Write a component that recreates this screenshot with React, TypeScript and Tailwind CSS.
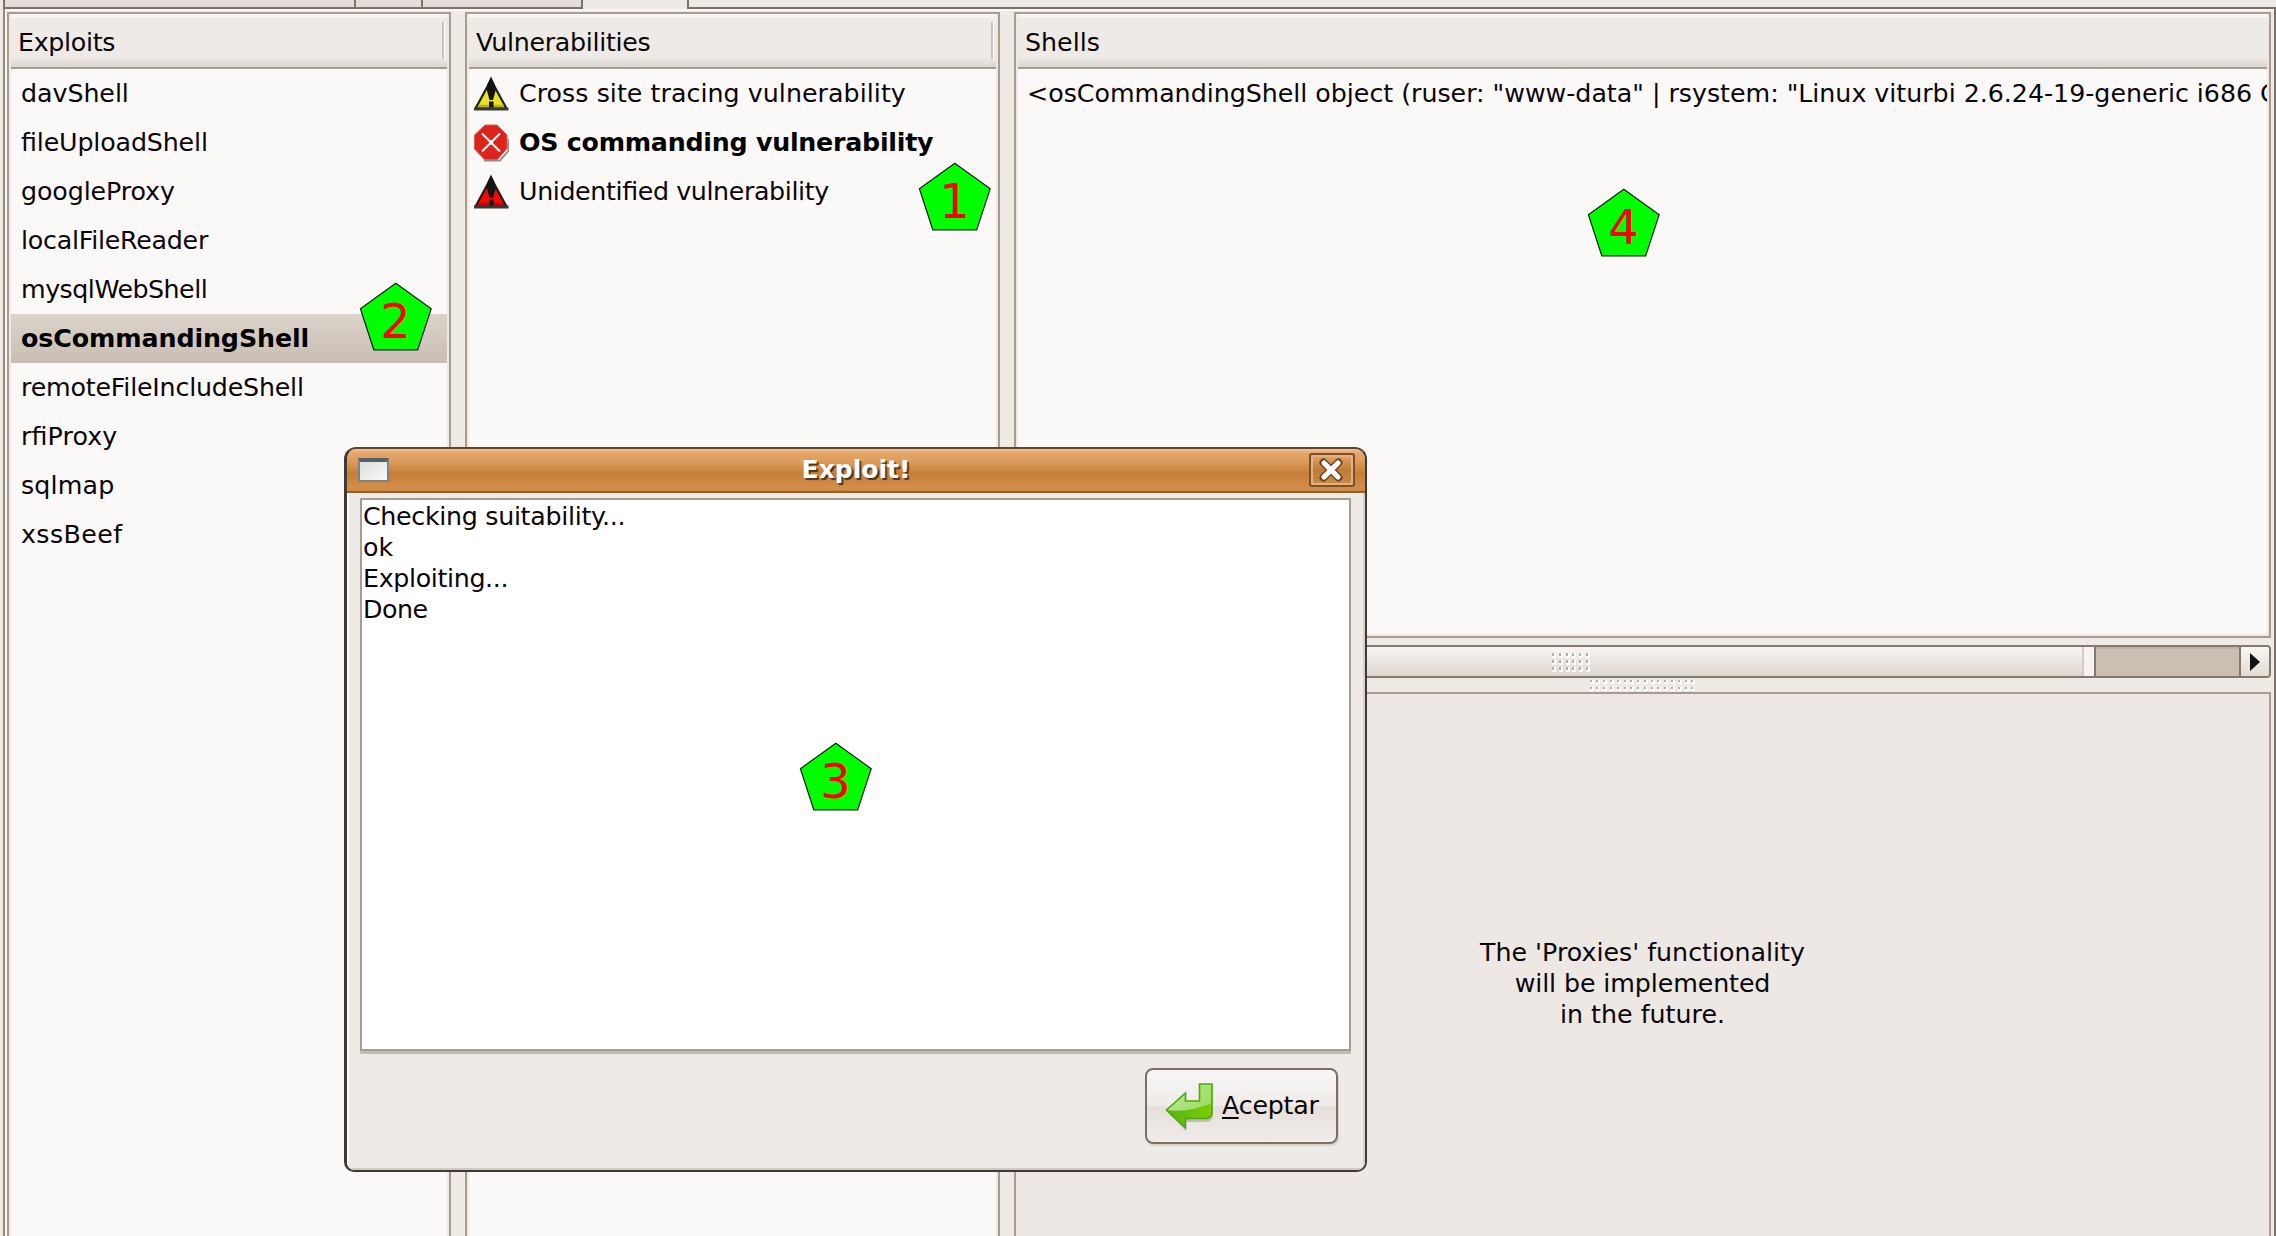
import React from "react";

const exploits = [
  { name: "davShell", tracking: "tracking-[-0.05px]" },
  { name: "fileUploadShell", tracking: "tracking-[-0.15px]" },
  { name: "googleProxy", tracking: "tracking-[-0.1px]" },
  { name: "localFileReader", tracking: "tracking-[-0.25px]" },
  { name: "mysqlWebShell", tracking: "tracking-[-0.5px]" },
  { name: "osCommandingShell", tracking: "tracking-[-0.1px]" },
  { name: "remoteFileIncludeShell", tracking: "tracking-[-0.2px]" },
  { name: "rfiProxy", tracking: "tracking-[0.1px]" },
  { name: "sqlmap", tracking: "tracking-[0.15px]" },
  { name: "xssBeef", tracking: "tracking-[0.4px]" },
];

const messages = [
  { text: "Checking suitability...", tracking: "tracking-[-0.3px]" },
  { text: "ok", tracking: "tracking-normal" },
  { text: "Exploiting...", tracking: "tracking-[-0.35px]" },
  { text: "Done", tracking: "tracking-[-0.5px]" },
];

function Pentagon({ n, className }: { n: number; className: string }) {
  return (
    <div className={`absolute h-[69px] w-[73px] ${className}`}>
      <svg className="block" width="73" height="69" viewBox="0 0 73 69">
        <path d="M36.8 1.2 L72.2 26.7 L58.7 67.8 H14.8 L1.4 26.7 Z" fill="#00ff00" stroke="#1c1c1c" strokeWidth="1.2" />
      </svg>
      <div className="absolute inset-x-0 top-[11px] text-center text-[48px] leading-[56px] text-[#ff0000]">{n}</div>
    </div>
  );
}

function Triangle({ fill, shade }: { fill: string; shade: string }) {
  return (
    <svg width="36" height="36" viewBox="0 0 36 36" className="block shrink-0">
      <path d="M18 4 L33.5 32.5 H2.5 Z" fill={fill} stroke="#1e1e1a" strokeWidth="2.2" strokeLinejoin="round" />
      <path d="M5.5 30 H31" stroke={shade} strokeWidth="2.4" />
      <path d="M1 33 H35.5" stroke="#383836" strokeWidth="2.8" />
      <path d="M18 0.5 L21.5 8 L23 13 L20 24 H16.5 L13.5 13 L14.5 8 Z" fill="#15150f" />
      <rect x="16" y="25.5" width="4.5" height="6" fill="#161610" />
    </svg>
  );
}

function StopIcon() {
  return (
    <svg width="36" height="40" viewBox="0 0 36 40" className="block shrink-0">
      <path d="M11 37.6 H27 L35.3 28 V16" fill="none" stroke="#8f8b88" strokeWidth="1.8" />
      <path d="M12 2 H24 L34 12 V25.5 L24.5 36.5 H11.5 L1.5 26 V12 Z" fill="#dc241c" stroke="#d95f58" strokeWidth="1" />
      <path d="M9 10.5 L27 28.5 M27 10.5 L9 28.5" stroke="#fff" strokeWidth="1.9" />
      <rect x="16" y="17.5" width="4" height="4" fill="#fff" />
    </svg>
  );
}

function Header({ title, divider, tracking }: { title: string; divider?: boolean; tracking: string }) {
  return (
    <div className="flex h-[55px] shrink-0 items-center justify-between border-b-2 border-[#a99b8d] bg-[linear-gradient(#f8f6f4_0,#f8f6f4_3px,#eeebe6_4px,#eeebe6_43px,#d9d5cf_53px)] pt-1 pl-[7px]">
      <span className={tracking}>{title}</span>
      {divider && <span className="mr-0.5 -mt-1 h-[37px] w-[3px] border-l-2 border-[#c9c4be] bg-white" />}
    </div>
  );
}

function Dots({ rows, cols }: { rows: number; cols: number }) {
  return (
    <div className="flex flex-col gap-[2.5px]">
      {Array.from({ length: rows }, (_, r) => (
        <div key={r} className="flex gap-[2.8px]">
          {Array.from({ length: cols }, (_, c) => (
            <i key={c} className="block h-[4.5px] w-[4px] border-r-2 border-b-2 border-white bg-[#b5b0aa]" />
          ))}
        </div>
      ))}
    </div>
  );
}

function TabStrip() {
  return (
    <div className="flex h-[9px] shrink-0">
      <div className="w-[3px]" />
      <div className="w-[353px] border-x-2 border-b-2 border-[#7d7267] bg-[#e3deda]" />
      <div className="w-[67px] border-r-2 border-b-2 border-[#7d7267] bg-[#e3deda]" />
      <div className="w-[160px] border-r-2 border-b-2 border-[#7d7267] bg-[#e3deda]" />
      <div className="w-[104px]" />
      <div className="flex-1 border-b-2 border-l-2 border-[#7d7267]" />
    </div>
  );
}

function Dialog() {
  return (
    <div className="absolute top-[447px] left-[344px] flex h-[725px] w-[1023px] flex-col overflow-hidden rounded-t-[12px] rounded-b-[10px] border-2 border-l-3 border-[#3f3a36] border-t-[#5d452c] bg-[#eeebe6]">
      <div className="flex h-[44px] shrink-0 items-center border-b-2 border-[#94612f] bg-[linear-gradient(#f3c49a_0,#e5a66a_4px,#d99a58_14px,#c57f38_24px,#d48f4b_40px,#c98441_42px)] pr-[10px] pl-[9px]">
        <div className="ml-[2px] h-[24px] w-[31px] border-2 border-[#84807c] border-t-4 border-t-[#585f68] bg-linear-to-br from-[#dcdcdc] to-[#fafafa]" />
        <div className="flex-1 pl-[14px] text-center text-[25px] leading-[40px] font-bold text-white [text-shadow:2px_2px_1px_#4a3421]">
          Exploit!
        </div>
        <div className="flex h-[34px] w-[46px] items-center justify-center rounded-[3px] border-2 border-[#7d5026] bg-linear-to-b from-[#e5a66d] via-[#bd7a38] to-[#ce8b4b] pr-[2px] shadow-[inset_0_0_0_2px_#e3b185]">
          <svg width="26" height="26" viewBox="0 0 26 26" className="block shrink-0">
            <path d="M5.5 5.5 L20.5 20.5 M20.5 5.5 L5.5 20.5" stroke="#6e451f" strokeWidth="8" strokeLinecap="round" />
            <path d="M6 6 L20 20 M20 6 L6 20" stroke="#fff" strokeWidth="5.2" strokeLinecap="round" />
          </svg>
        </div>
      </div>
      <div className="flex flex-1 flex-col border-x-2 border-b-2 border-l-white border-r-[#d8d2cb] border-b-[#cfc9c2] px-[11px] pt-[5px]">
        <div className="h-[553px] w-[991px] border-2 border-[#a99b8d] bg-white pt-px pl-px shadow-[0_3px_0_#bfbcb4]">
          {messages.map(({ text, tracking }) => (
            <div key={text} className={`h-[31px] leading-[31px] ${tracking}`}>
              {text}
            </div>
          ))}
        </div>
        <div className="mt-[17px] mr-[14px] flex h-[76px] w-[193px] items-center self-end rounded-[8px] border-2 border-[#7c7064] bg-[linear-gradient(#f8f7f6_0,#eeebe8_50%,#e6e0dc_51%,#f0ece9_100%)] pl-[17px] shadow-[1px_2px_0_#d8d3cd]">
          <svg width="52" height="50" viewBox="0 0 52 50" className="block shrink-0">
            <defs>
              <linearGradient id="arrowTop" x1="0" y1="0" x2="1" y2="1">
                <stop offset="0" stopColor="#c0eaa0" />
                <stop offset="1" stopColor="#8fd74c" />
              </linearGradient>
              <linearGradient id="arrowLow" x1="0" y1="0" x2="1" y2="0">
                <stop offset="0" stopColor="#58b415" />
                <stop offset="1" stopColor="#77d000" />
              </linearGradient>
            </defs>
            <path d="M36 3.5 H49 V33 Q49 40 42 40 H22 V49 L3 30 L22 13 V21 H36 Z" fill="#000" opacity="0.18" transform="translate(0 1)" />
            <path d="M35.5 3 H48 V31 Q48 37.5 41.5 37.5 H21.5 V47 L2.5 29 L21.5 12 V20 H35.5 Z" fill="url(#arrowTop)" />
            <path d="M2.5 29 Q24 32 48 22 V31 Q48 37.5 41.5 37.5 H21.5 V47 Z" fill="url(#arrowLow)" />
            <path d="M35.5 3 H48 V31 Q48 37.5 41.5 37.5 H21.5 V47 L2.5 29 L21.5 12 V20 H35.5 Z" fill="none" stroke="#4fa610" strokeWidth="1.6" />
          </svg>
          <span className="ml-[6px] tracking-[-0.2px] leading-[30px]">
            <span className="underline decoration-2 underline-offset-[3px]">A</span>ceptar
          </span>
        </div>
      </div>
    </div>
  );
}

export default function App() {
  return (
    <div className="relative flex h-[1236px] w-[2276px] flex-col overflow-hidden bg-[#eeebe6] font-['DejaVu_Sans',sans-serif] text-[25.3px] leading-[30px] whitespace-nowrap text-[#0a0508]">
      <TabStrip />
      <div className="ml-[3px] flex flex-1 border-r-2 border-l-2 border-l-[#938980] border-r-[#7d7267] bg-[#eeebe6] pt-[3px] pr-[3px] pl-[2px] shadow-[inset_2px_2px_0_#f8f6f4]">
        <div className="-mb-2 flex w-[444px] flex-col border-2 border-[#a99b8d] bg-[#faf9f7] px-[2px] shadow-[inset_0_0_0_2px_#efe8e3]">
          <Header title="Exploits" divider tracking="tracking-[-0.3px]" />
          {exploits.map(({ name, tracking }) => (
            <div
              key={name}
              className={`flex h-[49px] items-center pl-[10px] [font-feature-settings:'liga'_1] ${tracking} ${
                name === "osCommandingShell" ? "bg-linear-to-b from-[#dbd3cb] to-[#c9beb3] font-bold text-black" : ""
              }`}
            >
              {name}
            </div>
          ))}
        </div>
        <div className="-mb-2 ml-[14px] flex w-[535px] flex-col border-2 border-[#a99b8d] bg-[#faf9f7] px-[2px] shadow-[inset_0_0_0_2px_#efe8e3]">
          <Header title="Vulnerabilities" divider tracking="tracking-[-0.3px]" />
          <div className="flex h-[49px] items-center gap-[10px] pl-1 tracking-[0.04px]">
            <Triangle fill="#e6e322" shade="#b5b119" />
            Cross site tracing vulnerability
          </div>
          <div className="flex h-[49px] items-center gap-[10px] pl-1 font-bold tracking-[-0.25px] text-black">
            <StopIcon />
            OS commanding vulnerability
          </div>
          <div className="flex h-[49px] items-center gap-[10px] pl-1 tracking-[-0.38px] [font-feature-settings:'liga'_1]">
            <Triangle fill="#fb0606" shade="#c50000" />
            Unidentified vulnerability
          </div>
        </div>
        <div className="ml-[14px] flex min-w-0 flex-1 flex-col">
          <div className="flex h-[626px] shrink-0 flex-col overflow-hidden border-2 border-[#a99b8d] bg-[#faf9f7] px-[2px] shadow-[inset_0_0_0_2px_#efe8e3]">
            <Header title="Shells" tracking="tracking-normal" />
            <div className="flex h-[49px] items-center overflow-hidden pl-[9px] tracking-[-0.02px]">
              {'<osCommandingShell object (ruser: "www-data" | rsystem: "Linux viturbi 2.6.24-19-generic i686 G'}
            </div>
          </div>
          <div className="mt-[7px] flex h-[33px] shrink-0 overflow-hidden rounded-[4px] border-2 border-[#85796d] bg-[#cbbfb4]">
            <div className="flex w-[1080px] items-center border-r-2 border-[#85796d] bg-[linear-gradient(90deg,transparent_1066px,#d3cdc7_1066px,#d3cdc7_1068px,#f6f4f2_1068px),linear-gradient(#f8f6f5,#ded6cf)] pt-[2px] pl-[536px]">
              <Dots rows={3} cols={6} />
            </div>
            <div className="flex-1 shadow-[inset_0_2px_0_#bfb2a6]" />
            <div className="flex w-[30px] items-center justify-center border-l-2 border-[#85796d] bg-linear-to-b from-[#f8f6f5] to-[#e3dcd6]">
              <svg width="10" height="18" viewBox="0 0 10 18" className="block">
                <path d="M0 0 L10 9 L0 18 Z" fill="#111" />
              </svg>
            </div>
          </div>
          <div className="flex h-[14px] shrink-0 items-center justify-center pt-px">
            <Dots rows={2} cols={16} />
          </div>
          <div className="-mb-2 flex flex-1 flex-col items-center border-2 border-[#a99b8d] bg-[#ede8e4] pt-[243px] text-center leading-[31px]">
            <div>The 'Proxies' functionality</div>
            <div className="tracking-[-0.1px]">will be implemented</div>
            <div>in the future.</div>
          </div>
        </div>
      </div>
      <Dialog />
      <Pentagon n={1} className="top-[162px] left-[918px]" />
      <Pentagon n={2} className="top-[282px] left-[359px]" />
      <Pentagon n={3} className="top-[742px] left-[799px]" />
      <Pentagon n={4} className="top-[188px] left-[1587px]" />
    </div>
  );
}
